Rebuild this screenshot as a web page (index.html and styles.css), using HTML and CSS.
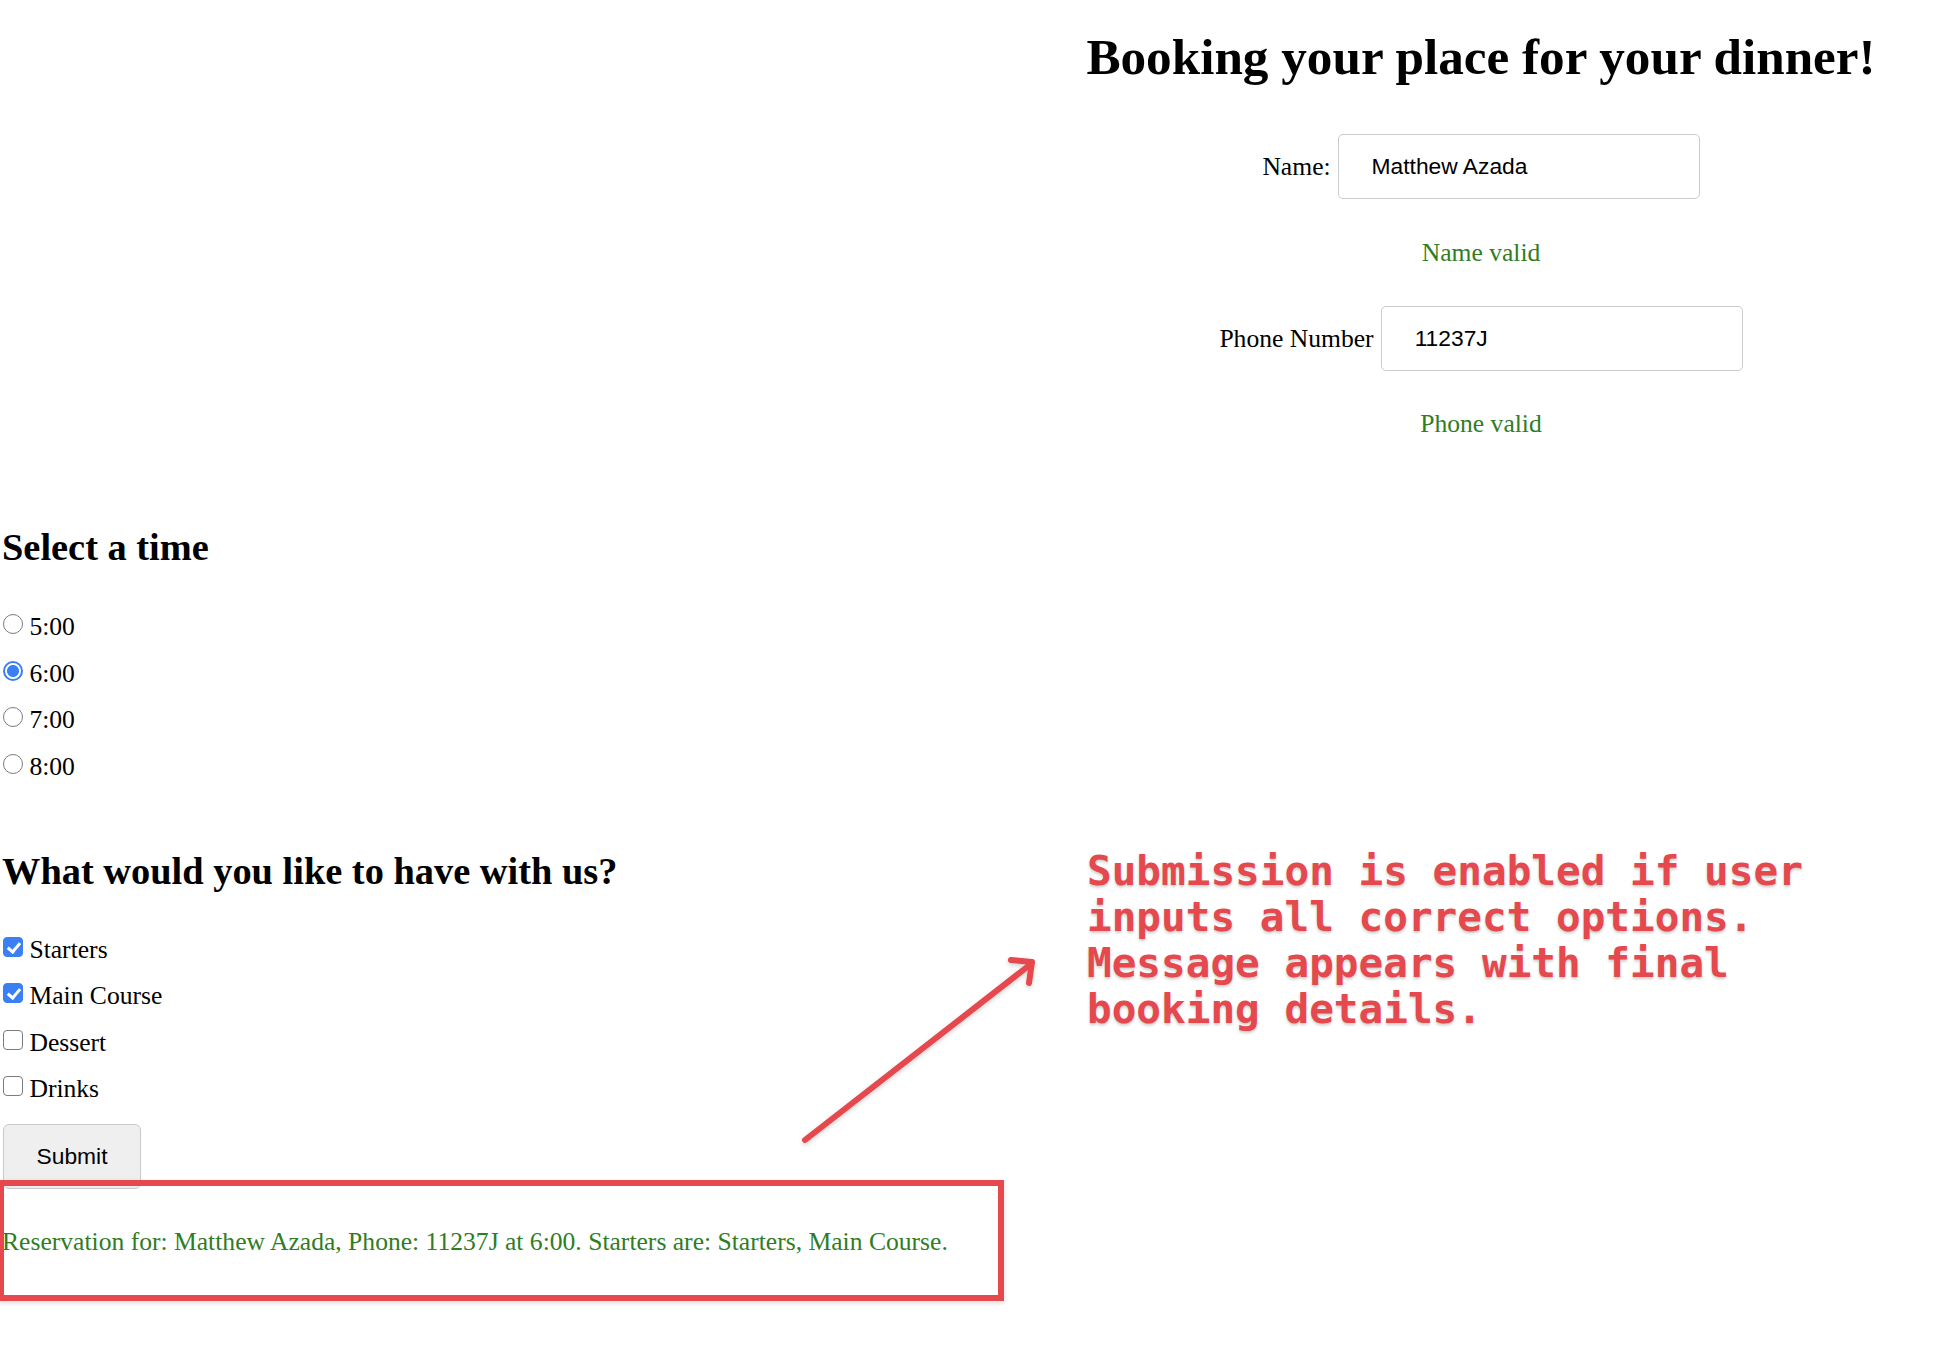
FILE: index.html
```html
<!DOCTYPE html>
<html lang="en">
<head>
<meta charset="utf-8">
<title>Booking your place for your dinner!</title>
<link rel="stylesheet" href="styles.css">
</head>
<body>
<div class="top">
  <div class="spacer"></div>
  <div class="booking">
    <h1 class="title">Booking your place for your dinner!</h1>
    <div class="field field-name">
      <label class="field-label" for="name">Name:</label>
      <input class="text-input" id="name" type="text" value="Matthew Azada">
    </div>
    <p class="valid valid-name">Name valid</p>
    <div class="field field-phone">
      <label class="field-label" for="phone">Phone Number</label>
      <input class="text-input" id="phone" type="text" value="11237J">
    </div>
    <p class="valid valid-phone">Phone valid</p>
  </div>
</div>

<section class="options">
  <h2 class="section-title section-time">Select a time</h2>
  <div class="choice-list radio-list">
    <div class="choice"><input class="radio" type="radio" name="time" id="t5"> <label for="t5">5:00</label></div>
    <div class="choice"><input class="radio" type="radio" name="time" id="t6" checked> <label for="t6">6:00</label></div>
    <div class="choice"><input class="radio" type="radio" name="time" id="t7"> <label for="t7">7:00</label></div>
    <div class="choice"><input class="radio" type="radio" name="time" id="t8"> <label for="t8">8:00</label></div>
  </div>

  <h2 class="section-title section-food">What would you like to have with us?</h2>
  <div class="choice-list check-list">
    <div class="choice"><input class="check" type="checkbox" id="c1" checked> <label for="c1">Starters</label></div>
    <div class="choice"><input class="check" type="checkbox" id="c2" checked> <label for="c2">Main Course</label></div>
    <div class="choice"><input class="check" type="checkbox" id="c3"> <label for="c3">Dessert</label></div>
    <div class="choice"><input class="check" type="checkbox" id="c4"> <label for="c4">Drinks</label></div>
  </div>

  <button class="submit" type="button">Submit</button>
  <p class="result">Reservation for: Matthew Azada, Phone: 11237J at 6:00. Starters are: Starters, Main Course.</p>
</section>

<div class="annot-box"></div>
<p class="annot-text">Submission is enabled if user<br>inputs all correct options.<br>Message appears with final<br>booking details.</p>
<svg class="annot-arrow" width="1960" height="1346" viewBox="0 0 1960 1346" xmlns="http://www.w3.org/2000/svg">
  <defs>
    <filter id="soft" x="-10%" y="-10%" width="120%" height="120%">
      <feDropShadow dx="0" dy="2" stdDeviation="2" flood-color="#000" flood-opacity="0.18"/>
    </filter>
  </defs>
  <g filter="url(#soft)" fill="none" stroke="#e5484d" stroke-width="6" stroke-linecap="round" stroke-linejoin="round">
    <path d="M805 1140 L1031 964"/>
    <path d="M1011 960 L1032 962 L1029 983"/>
  </g>
</svg>
</body>
</html>
```

FILE: styles.css
```css
html, body {
  margin: 0;
  padding: 0;
  background: #ffffff;
}

body {
  font-family: "Liberation Serif", "Times New Roman", serif;
  font-size: 25.6px;
  color: #000;
  position: relative;
  min-height: 1346px;
  overflow: hidden;
}

.top {
  display: grid;
  grid-template-columns: 1002px 1fr;
}

.booking {
  text-align: center;
}

.title {
  font-size: 51.2px;
  line-height: 59px;
  font-weight: bold;
  margin: 27px 0 0;
}

.field {
  display: flex;
  justify-content: center;
  align-items: center;
  gap: 7px;
}

.field-name { margin-top: 48px; }
.field-phone { margin-top: 39px; }

.field-label {
  line-height: 29px;
}

.text-input {
  width: 362px;
  height: 65px;
  box-sizing: border-box;
  border: 1px solid #cbcbcb;
  border-radius: 5px;
  padding: 0 33px;
  font-family: "Liberation Sans", Arial, sans-serif;
  font-size: 22.8px;
  color: #000;
  background: #fff;
  outline: none;
}

.valid {
  color: #2f7d1f;
  line-height: 29px;
  margin: 39px 0 0;
}

.valid-phone { margin-top: 38px; }

.options {
  padding-left: 2px;
}

.section-title {
  font-size: 38.4px;
  line-height: 44px;
  font-weight: bold;
  margin: 0;
}

.section-time { margin-top: 87px; }
.section-food { margin-top: 59px; }

.radio-list { margin-top: 35px; }
.check-list { margin-top: 34px; }

.choice {
  line-height: 46.5px;
  height: 46.5px;
}

.check-list .choice {
  line-height: 46.3px;
  height: 46.3px;
}

.radio,
.check {
  appearance: none;
  -webkit-appearance: none;
  display: inline-block;
  width: 20px;
  height: 20px;
  box-sizing: border-box;
  margin: 0 0 1px 1px;
  background: #fff;
  position: relative;
  vertical-align: baseline;
}

.radio {
  border: 1.6px solid #7c7c7c;
  border-radius: 50%;
}

.radio:checked {
  border: 2px solid #3b7ff5;
  background: radial-gradient(circle, #3b7ff5 0, #3b7ff5 5.6px, #ffffff 6.4px);
}

.check {
  border: 1.6px solid #7c7c7c;
  border-radius: 4px;
}

.check:checked {
  border-color: #3b7ff5;
  background: #3b7ff5;
}

.check:checked::after {
  content: "";
  position: absolute;
  left: 5.5px;
  top: 1.5px;
  width: 5px;
  height: 10px;
  border-right: 3px solid #fff;
  border-bottom: 3px solid #fff;
  transform: rotate(40deg);
}

.submit {
  display: block;
  margin: 12px 0 0 1px;
  width: 138px;
  height: 65px;
  box-sizing: border-box;
  background: #efefef;
  border: 1px solid #c9c9c9;
  border-radius: 6px;
  font-family: "Liberation Sans", Arial, sans-serif;
  font-size: 22.8px;
  color: #000;
  padding: 0;
}

.result {
  color: #2f7d1f;
  line-height: 29px;
  margin: 38px 0 0;
}

.annot-box {
  position: absolute;
  left: -2px;
  top: 1180px;
  width: 1006px;
  height: 121px;
  box-sizing: border-box;
  border: 6px solid #e5484d;
  box-shadow: 0 2px 5px rgba(0, 0, 0, 0.15);
}

.annot-text {
  position: absolute;
  left: 1087px;
  top: 848px;
  margin: 0;
  font-family: "DejaVu Sans Mono", "Liberation Mono", monospace;
  font-weight: bold;
  font-size: 41px;
  line-height: 46px;
  color: #e5484d;
  white-space: nowrap;
  text-shadow: 0 2px 3px rgba(0, 0, 0, 0.2);
}

.annot-arrow {
  position: absolute;
  left: 0;
  top: 0;
  pointer-events: none;
}
```
